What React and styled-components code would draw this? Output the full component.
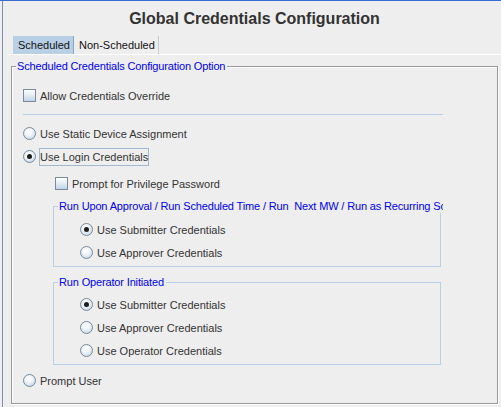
import React from "react";
import styled, { createGlobalStyle } from "styled-components";

const GlobalStyle = createGlobalStyle`
  html, body {
    margin: 0;
    padding: 0;
    background: #eeeeee;
  }
  body {
    font-family: "Liberation Sans", Arial, sans-serif;
    font-size: 11px;
    color: #333333;
  }
`;

const App = () => {
  return (
    <>
      <GlobalStyle />
      <Window>
        <Frame>
          <Heading>Global Credentials Configuration</Heading>
          <TabStrip>
            <Tab $active>Scheduled</Tab>
            <Tab>Non-Scheduled</Tab>
          </TabStrip>

          <Group $etched>
            <GroupTitle>Scheduled Credentials Configuration Option</GroupTitle>
            <GroupBody $pl={11} $pb={11}>
              <Option type="check" mt={11} label="Allow Credentials Override" />
              <Separator />
              <Option type="radio" mt={7} label="Use Static Device Assignment" />
              <Option type="radio" checked focus label="Use Login Credentials" />
              <Option type="check" mt={4} ml={32} label="Prompt for Privilege Password" />

              <Group $mt={11} $ml={30}>
                <GroupTitle $width={385}>
                  Run Upon Approval / Run Scheduled Time / Run  Next MW / Run as Recurring Schedule
                </GroupTitle>
                <GroupBody $pl={26} $pb={2}>
                  <Option type="radio" mt={5} checked label="Use Submitter Credentials" />
                  <Option type="radio" label="Use Approver Credentials" />
                </GroupBody>
              </Group>

              <Group $mt={15} $ml={30}>
                <GroupTitle>Run Operator Initiated</GroupTitle>
                <GroupBody $pl={26} $pb={2}>
                  <Option type="radio" mt={4} checked label="Use Submitter Credentials" />
                  <Option type="radio" label="Use Approver Credentials" />
                  <Option type="radio" label="Use Operator Credentials" />
                </GroupBody>
              </Group>

              <Option type="radio" mt={4} label="Prompt User" />
            </GroupBody>
          </Group>
        </Frame>
      </Window>
    </>
  );
};

const Option = ({ type, label, checked, focus, mt = 0, ml = 0 }) => (
  <Row $mt={mt} $ml={ml}>
    {type === "radio" ? <Radio $checked={checked} /> : <Check />}
    <Label $focus={focus}>{label}</Label>
  </Row>
);

const Window = styled.div`
  width: 501px;
  height: 407px;
  box-sizing: border-box;
  border-top: 1px solid #3a6bd1;
  background: #eeeeee;
  overflow: hidden;
`;

const Frame = styled.div`
  margin-left: 2px;
  height: 406px;
  border-left: 1px solid #7d8fb0;
`;

const Heading = styled.div`
  height: 35px;
  line-height: 35px;
  padding-left: 5px;
  text-align: center;
  font-size: 16px;
  font-weight: bold;
  color: #333333;
`;

const TabStrip = styled.div`
  display: flex;
  height: 18px;
  margin-left: 5px;
  padding-left: 5px;
  border-bottom: 1px solid #ffffff;
`;

const Tab = styled.div`
  padding: 0 3px 0 5px;
  line-height: 18px;
  font-size: 11px;
  color: #111111;
  background: ${(p) => (p.$active ? "#b8cfe5" : "transparent")};
  border-right: 1px solid ${(p) => (p.$active ? "#8da4bd" : "#cccccc")};
`;

const Group = styled.div`
  box-sizing: border-box;
  width: ${(p) => (p.$etched ? "487px" : "388px")};
  margin: ${(p) => (p.$etched ? "11px 0 0 8px" : `${p.$mt}px 0 0 ${p.$ml}px`)};
  border: 1px solid ${(p) => (p.$etched ? "#999999" : "#b8cfe5")};
  box-shadow: ${(p) =>
    p.$etched ? "inset 1px 1px 0 #ffffff, 1px 1px 0 #ffffff" : "none"};
`;

const GroupTitle = styled.div`
  width: ${(p) => (p.$width ? `${p.$width}px` : "fit-content")};
  box-sizing: border-box;
  margin: -7px 0 0 4px;
  padding: 0 2px 0 1px;
  line-height: 13px;
  font-size: 11px;
  letter-spacing: -0.15px;
  color: #0000ee;
  background: #eeeeee;
  white-space: pre;
  overflow: hidden;
`;

const GroupBody = styled.div`
  padding: 0 0 ${(p) => p.$pb}px ${(p) => p.$pl}px;
`;

const Separator = styled.div`
  width: 420px;
  height: 1px;
  margin-top: 7px;
  background: #b8cfe5;
`;

const Row = styled.div`
  display: flex;
  align-items: center;
  gap: 3px;
  height: 23px;
  margin-top: ${(p) => p.$mt}px;
  margin-left: ${(p) => p.$ml}px;
`;

const Label = styled.span`
  box-sizing: border-box;
  height: 18px;
  line-height: 16px;
  border: 1px solid ${(p) => (p.$focus ? "#a3b8cc" : "transparent")};
  font-size: 11px;
  color: #333333;
  white-space: nowrap;
`;

const Check = styled.span`
  box-sizing: border-box;
  width: 13px;
  height: 13px;
  flex: none;
  border: 1px solid #7a8a99;
  background: linear-gradient(to bottom, #ffffff 0%, #e6eef6 45%, #bfd2e6 100%);
`;

const Radio = styled.span`
  position: relative;
  box-sizing: border-box;
  width: 13px;
  height: 13px;
  flex: none;
  border-radius: 50%;
  border: 1px solid #7a8a99;
  background: radial-gradient(
    circle at 45% 35%,
    #ffffff 0%,
    #f2f6fa 35%,
    #b8cfe5 100%
  );

  &::after {
    content: "";
    display: ${(p) => (p.$checked ? "block" : "none")};
    position: absolute;
    left: 3px;
    top: 3px;
    width: 5px;
    height: 5px;
    border-radius: 50%;
    background: #1e1e1e;
  }
`;

export default App;
